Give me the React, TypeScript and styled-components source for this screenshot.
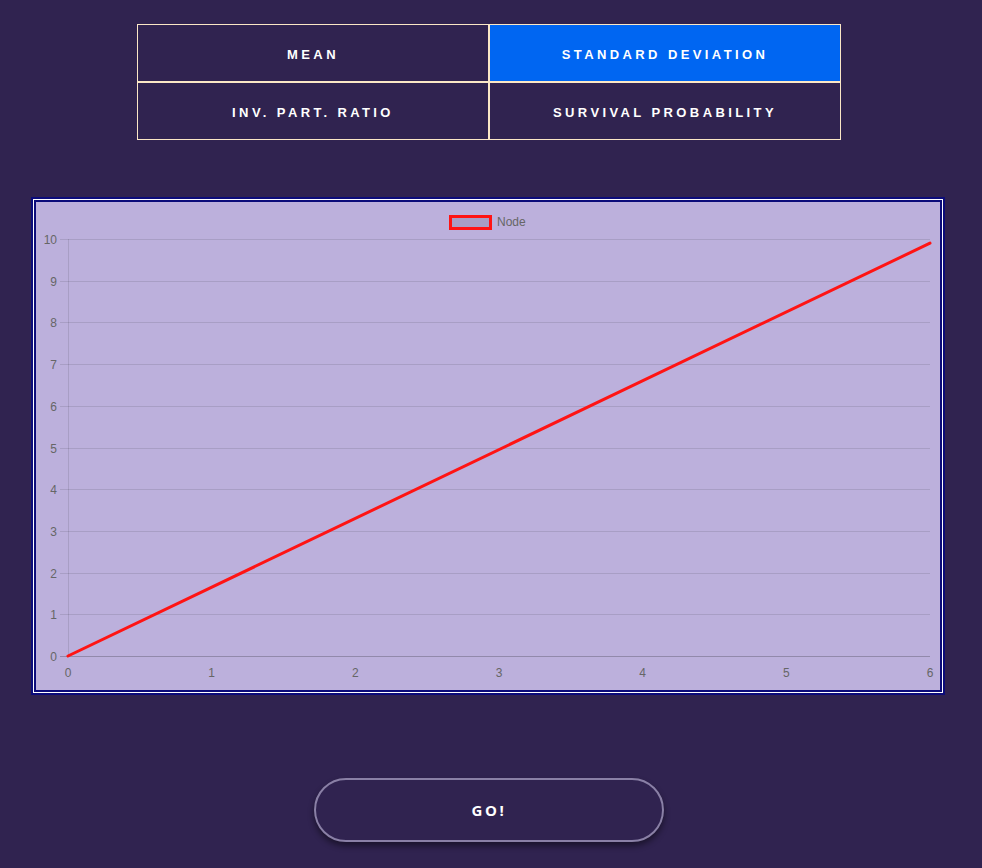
import React from "react";
import styled, { createGlobalStyle } from "styled-components";

const Global = createGlobalStyle`
  html, body {
    margin: 0;
    padding: 0;
    background: #302350;
  }
  body {
    font-family: "Liberation Sans", Arial, sans-serif;
  }
`;

const Page = styled.div`
  display: flex;
  flex-direction: column;
  align-items: flex-start;
  padding-top: 24px;
  min-height: 868px;
  box-sizing: border-box;
`;

const Tabs = styled.div`
  display: grid;
  grid-template-columns: 352px 352px;
  grid-auto-rows: 58px;
  margin-left: 137px;
`;

const Tab = styled.button<{ $active?: boolean }>`
  display: flex;
  align-items: center;
  justify-content: center;
  box-sizing: border-box;
  margin: 0;
  padding: 3px 0 0 0;
  border: 1px solid #fbe7c6;
  background: ${(p) => (p.$active ? "#0066f2" : "#302350")};
  color: #ffffff;
  font-family: "Liberation Sans", Arial, sans-serif;
  font-weight: 700;
  font-size: 13px;
  letter-spacing: 3.4px;
  text-transform: uppercase;
  cursor: pointer;
`;

const ChartBox = styled.div`
  margin: 60px 0 0 34px;
  width: 908px;
  height: 492px;
  box-sizing: border-box;
  border: 2px solid #0c0c7a;
  box-shadow: 0 0 0 1px #ffffff, 0 0 0 3px #0c0c7a;
  background: #bcb0dc;
  display: flex;
`;

const GoButton = styled.button`
  margin: 86px 0 0 314px;
  width: 350px;
  height: 64px;
  box-sizing: border-box;
  border: 2px solid #8a80a6;
  border-radius: 32px;
  background: #302350;
  color: #ffffff;
  font-family: "Open Sans", "Liberation Sans", sans-serif;
  font-weight: 700;
  font-size: 15px;
  letter-spacing: 2.6px;
  box-shadow: 0 4px 6px rgba(0, 0, 0, 0.45);
  cursor: pointer;
  padding: 0;
`;

const X0 = 32;
const X6 = 894;
const Y0 = 454;
const Y10 = 37;
const yAt = (v: number) => Y0 - ((Y0 - Y10) * v) / 10;
const xAt = (v: number) => X0 + ((X6 - X0) * v) / 6;

const Chart: React.FC = () => {
  const ys = Array.from({ length: 11 }, (_, i) => i);
  const xs = Array.from({ length: 7 }, (_, i) => i);
  return (
    <svg width="904" height="488" viewBox="0 0 904 488" style={{ display: "block" }}>
      <g fontFamily="'Liberation Sans', Arial, sans-serif" fontSize="12" fill="#666">
        <rect x="414.5" y="14.5" width="40" height="12" fill="rgba(0,0,0,0.1)" stroke="#ff1414" strokeWidth="3" />
        <text x="461" y="24">Node</text>
        {ys.map((v) => (
          <g key={v}>
            <line
              x1={24}
              x2={X6}
              y1={Math.round(yAt(v)) + 0.5}
              y2={Math.round(yAt(v)) + 0.5}
              stroke={v === 0 ? "rgba(0,0,0,0.22)" : "rgba(0,0,0,0.1)"}
              strokeWidth="1"
            />
            <text x={21} y={Math.round(yAt(v)) + 4.5} textAnchor="end">
              {v}
            </text>
          </g>
        ))}
        <line x1={X0 + 0.5} x2={X0 + 0.5} y1={Y10} y2={Y0 + 1} stroke="rgba(0,0,0,0.1)" strokeWidth="1" />
        {xs.map((v) => (
          <text key={v} x={xAt(v)} y={475} textAnchor="middle">
            {v}
          </text>
        ))}
        <line x1={X0} y1={Y0} x2={X6} y2={yAt(9.9)} stroke="#ff1414" strokeWidth="3" strokeLinecap="round" />
      </g>
    </svg>
  );
};

export default function App() {
  const tabs = [
    { label: "Mean", active: false },
    { label: "Standard Deviation", active: true },
    { label: "Inv. Part. Ratio", active: false },
    { label: "Survival Probability", active: false },
  ];
  return (
    <>
      <Global />
      <Page>
        <Tabs>
          {tabs.map((t) => (
            <Tab key={t.label} $active={t.active}>
              {t.label}
            </Tab>
          ))}
        </Tabs>
        <ChartBox>
          <Chart />
        </ChartBox>
        <GoButton>GO!</GoButton>
      </Page>
    </>
  );
}
